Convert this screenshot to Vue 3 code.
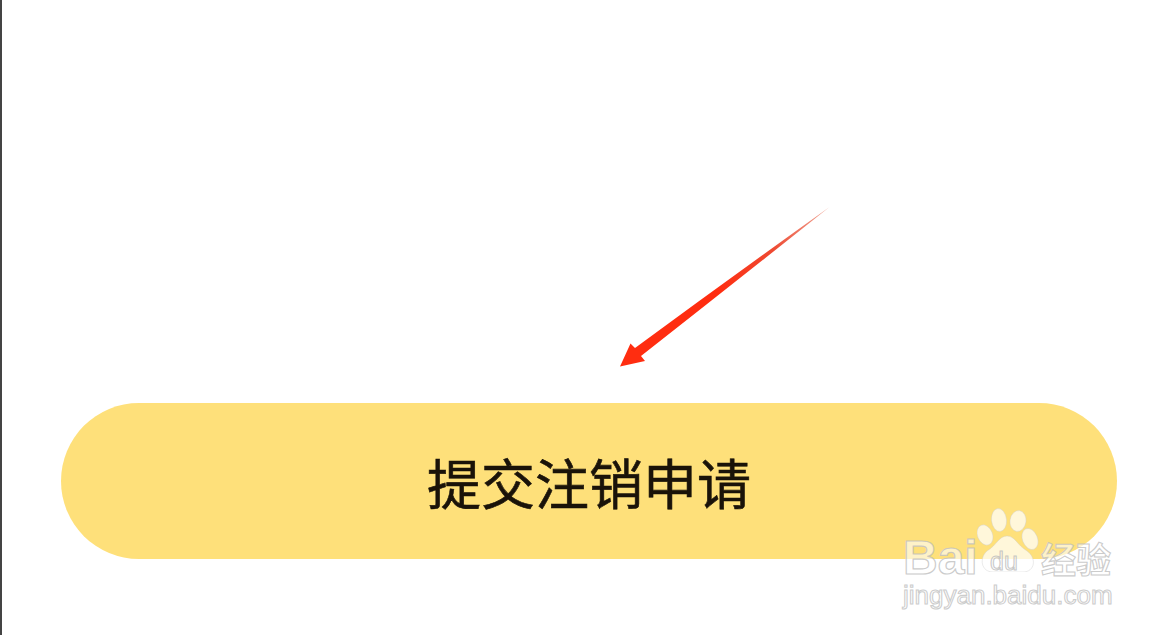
<script setup>
const title = '提交注销申请'
</script>

<template>
  <main class="page">
    <button class="submit" type="button">{{ title }}</button>

    <svg class="arrow" viewBox="0 0 1176 635" aria-hidden="true">
      <defs>
        <linearGradient id="tail" gradientUnits="userSpaceOnUse" x1="829" y1="207" x2="720" y2="295">
          <stop offset="0" stop-color="#f0a898" />
          <stop offset="0.5" stop-color="#ee4a32" />
          <stop offset="1" stop-color="#ff2d10" />
        </linearGradient>
      </defs>
      <path fill="url(#tail)" d="M829.500 207 Q735.400 282 641 356 L645 361 L620 366.500 L630.500 343.500 L635 348 Q731.600 277 829.500 207 Z" />
    </svg>

    <div class="mark">
      <div class="mark-top">
        <span class="bai">Bai</span>
        <div class="paw">
          <svg viewBox="0 0 62 64" class="paw-art" aria-hidden="true">
            <ellipse cx="22" cy="12" rx="7.500" ry="11.500" transform="rotate(-6 22 12)" />
            <ellipse cx="41" cy="13" rx="8" ry="10.500" transform="rotate(8 41 13)" />
            <ellipse cx="8" cy="27" rx="7.500" ry="10.500" transform="rotate(-22 8 27)" />
            <ellipse cx="53" cy="31" rx="7.500" ry="11" transform="rotate(-22 53 31)" />
            <path d="M30 28 C38 28 40 37 50 43 C60 50 58 64 46 64 L16 64 C4 64 2 50 10 43 C20 37 22 28 30 28 Z" />
          </svg>
          <span class="du">du</span>
        </div>
        <span class="jy">经验</span>
      </div>
      <div class="url">jingyan.baidu.com</div>
    </div>
  </main>
</template>

<style>
html, body { margin: 0; background: #fff; }
</style>

<style scoped>
.page {
  position: relative;
  box-sizing: border-box;
  width: 1176px;
  height: 635px;
  overflow: hidden;
  background: #fff;
  border-left: 2px solid #444;
  padding: 403px 59px 0;
}
.submit {
  display: flex;
  align-items: center;
  justify-content: center;
  width: 1056px;
  height: 156px;
  padding: 2px 0 0;
  margin: 0;
  border: 0;
  border-radius: 78px;
  background: #fee07a;
  color: #1a1309;
  font-family: "Noto Sans CJK SC", sans-serif;
  font-size: 54px;
  font-weight: 400;
  line-height: 1;
  -webkit-text-stroke: 0.6px #1a1309;
}
.arrow {
  position: absolute;
  left: -2px;
  top: 0;
  width: 1176px;
  height: 635px;
  pointer-events: none;
}
.mark {
  position: absolute;
  left: 901px;
  top: 508px;
  width: 216px;
  color: rgba(255, 255, 255, 0.62);
}
.mark-top {
  display: flex;
  align-items: flex-start;
  height: 68px;
}
.bai {
  flex: none;
  width: 74px;
  margin-top: 26px;
  font-family: "Liberation Sans", sans-serif;
  font-size: 48px;
  font-weight: 700;
  line-height: 48px;
  -webkit-text-stroke: 1.2px rgba(190, 190, 190, 0.8);
}
.paw {
  position: relative;
  flex: none;
  width: 62px;
  height: 64px;
}
.paw-art {
  display: block;
  width: 62px;
  height: 64px;
  fill: rgba(255, 255, 255, 0.72);
  stroke: rgba(205, 205, 205, 0.5);
  stroke-width: 0.8;
}
.du {
  position: absolute;
  left: 13px;
  bottom: -2px;
  font-family: "Liberation Sans", sans-serif;
  font-size: 25px;
  line-height: 25px;
  color: rgba(255, 255, 255, 0.2);
  -webkit-text-stroke: 1.1px rgba(190, 190, 190, 0.85);
}
.jy {
  flex: none;
  margin-top: 32px;
  margin-left: 2px;
  font-family: "Noto Sans CJK SC", sans-serif;
  font-size: 35px;
  font-weight: 700;
  line-height: 36px;
  -webkit-text-stroke: 1.1px rgba(190, 190, 190, 0.8);
}
.url {
  margin-top: 4px;
  font-family: "Liberation Sans", sans-serif;
  font-size: 26px;
  line-height: 30px;
  color: rgba(255, 255, 255, 0.75);
  -webkit-text-stroke: 1.1px rgba(195, 195, 195, 0.85);
}
</style>
